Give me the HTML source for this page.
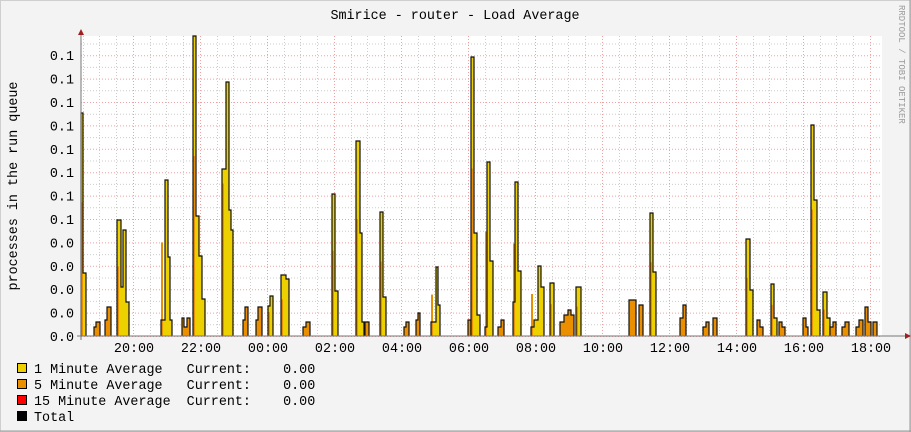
<!DOCTYPE html>
<html><head><meta charset="utf-8"><style>
html,body{margin:0;padding:0;background:#f3f3f3}
body{width:911px;height:432px;overflow:hidden;position:relative}
svg{position:absolute;left:0;top:0}
text{font-family:"Liberation Mono","DejaVu Sans Mono",monospace;font-size:13.4px;fill:#000}
</style></head><body>
<svg width="911" height="432" id="g">
<rect x="0.5" y="0.5" width="910" height="431" fill="#f3f3f3" stroke="#cfcfcf"/>
<line x1="0" y1="431" x2="911" y2="431" stroke="#999"/>
<line x1="910" y1="0" x2="910" y2="432" stroke="#999"/>
<rect x="81" y="36" width="801" height="300" fill="#fff"/>
<g id="grid"></g>
<g id="data"></g>
<line x1="81" y1="34" x2="81" y2="340" stroke="#777"/>
<line x1="77" y1="336" x2="905" y2="336" stroke="#777"/>
<polygon points="78,35 84,35 81,29" fill="#a02020"/>
<polygon points="905,333 905,339 911,336" fill="#a02020"/>
<text x="455" y="19" text-anchor="middle">Smirice - router - Load Average</text>
<text transform="translate(17,186) rotate(-90)" text-anchor="middle">processes in the run queue</text>
<text transform="translate(899,5) rotate(90)" style="font-size:9px;fill:#999">RRDTOOL / TOBI OETIKER</text>
<g id="ylab"></g><g id="xlab"></g>
<rect x="17.5" y="363.5" width="9" height="9" fill="#ecd000" stroke="#000"/>
<rect x="17.5" y="379.5" width="9" height="9" fill="#ea8f00" stroke="#000"/>
<rect x="17.5" y="395.5" width="9" height="9" fill="#ff0000" stroke="#000"/>
<rect x="17.5" y="411.5" width="9" height="9" fill="#000" stroke="#000"/>
<text x="34" y="373" xml:space="preserve">1 Minute Average   Current:    0.00</text>
<text x="34" y="389" xml:space="preserve">5 Minute Average   Current:    0.00</text>
<text x="34" y="405" xml:space="preserve">15 Minute Average  Current:    0.00</text>
<text x="34" y="421">Total</text>
</svg>
<script>
var NS="http://www.w3.org/2000/svg";
function el(p,t,a,txt){var e=document.createElementNS(NS,t);for(var k in a)e.setAttribute(k,a[k]);if(txt)e.textContent=txt;document.getElementById(p).appendChild(e);return e;}
var i,y,x;
for(i=0;i<=25;i++){y=336-i*11.7;if(y<37)break;el("grid","line",{x1:81,x2:882,y1:y+.5,y2:y+.5,stroke:i%2?"#ccc":"#f0a0a0","stroke-dasharray":"1,2"});}
for(x=82.5;x<882;x+=16.75){var maj=Math.abs(((x-133.5)/67)-Math.round((x-133.5)/67))<0.05;el("grid","line",{x1:Math.round(x)+.5,x2:Math.round(x)+.5,y1:36,y2:336,stroke:maj?"#f0a0a0":"#ccc","stroke-dasharray":"1,2"});}
for(i=0;i<=12;i++){y=336-i*23.4;el("ylab","text",{x:74,y:y+5,"text-anchor":"end"},i<=4?"0.0":"0.1");}
var hrs=["20:00","22:00","00:00","02:00","04:00","06:00","08:00","10:00","12:00","14:00","16:00","18:00"];
for(i=0;i<hrs.length;i++)el("xlab","text",{x:134+i*67,y:352,"text-anchor":"middle"},hrs[i]);
var S=[
[81,[[81,113],[83,273]],86],[94,[[94,327],[96,322]],100],[105,[[105,320],[107,307]],111],
[117,[[117,220],[121,287],[123,230],[126,302]],129],[161,[[161,320],[165,180],[168,257],[170,320]],172],
[182,[[182,318],[184,327],[187,318]],190],[193,[[193,36],[196,216],[199,256],[202,299]],205],
[222,[[222,169],[226,82],[229,210],[231,230]],233],[243,[[243,320],[245,307]],248],[256,[[256,320],[258,307]],262],
[268,[[268,306],[270,296]],273],[281,[[281,275],[286,279]],289],[303,[[303,327],[306,322]],310],
[332,[[332,194],[335,291]],338],[356,[[356,141],[360,233],[362,322]],364],[365,[[365,322]],369],
[380,[[380,212],[383,297]],386],[404,[[404,327],[406,322]],409],[416,[[416,320],[418,313]],420],
[431,[[431,322],[436,267],[438,305]],440],[468,[[468,320]],471],[471,[[471,57],[474,233],[477,315]],480],
[485,[[485,327],[487,162],[490,261]],493],[498,[[498,327],[501,320]],504],[513,[[513,302],[515,182],[518,271]],521],
[531,[[531,327],[534,320],[538,266],[541,287]],544],[550,[[550,283]],554],[560,[[560,322],[564,315],[568,310],[571,315]],574],
[576,[[576,287]],581],[629,[[629,300]],636],[639,[[639,305]],643],[650,[[650,213],[653,272]],656],
[680,[[680,318],[683,305]],686],[703,[[703,327],[706,322]],709],[713,[[713,318]],717],
[746,[[746,239],[750,290]],753],[757,[[757,320],[760,327]],763],[771,[[771,284],[774,318]],777],
[779,[[779,322],[782,327]],785],[803,[[803,318],[806,327]],808],[811,[[811,125],[814,200],[817,310]],820],
[823,[[823,292],[827,318]],830],[830,[[830,327],[833,322]],836],[842,[[842,327],[845,322]],849],
[856,[[856,327],[859,320]],863],[865,[[865,307],[868,322]],871],[873,[[873,322]],877]];
S.forEach(function(s){var d="M"+s[0]+",336",cur=336;s[1].forEach(function(p){d+=" L"+p[0]+","+cur+" L"+p[0]+","+p[1];cur=p[1];});d+=" L"+s[2]+","+cur+" L"+s[2]+",336";
var h=336-Math.min.apply(null,s[1].map(function(p){return p[1]}));
el("data","path",{d:d+" Z",fill:h<40?"#ea8f00":"#ecd000",stroke:"none"});
if(h>=40)el("data","rect",{x:s[0],y:336-h*0.6,width:Math.max(1,Math.min(2,s[2]-s[0]-2)),height:h*0.6,fill:"#ea8f00"});
el("data","path",{d:d,fill:"none",stroke:"#111","stroke-width":1.2});});
</script>
</body></html>
